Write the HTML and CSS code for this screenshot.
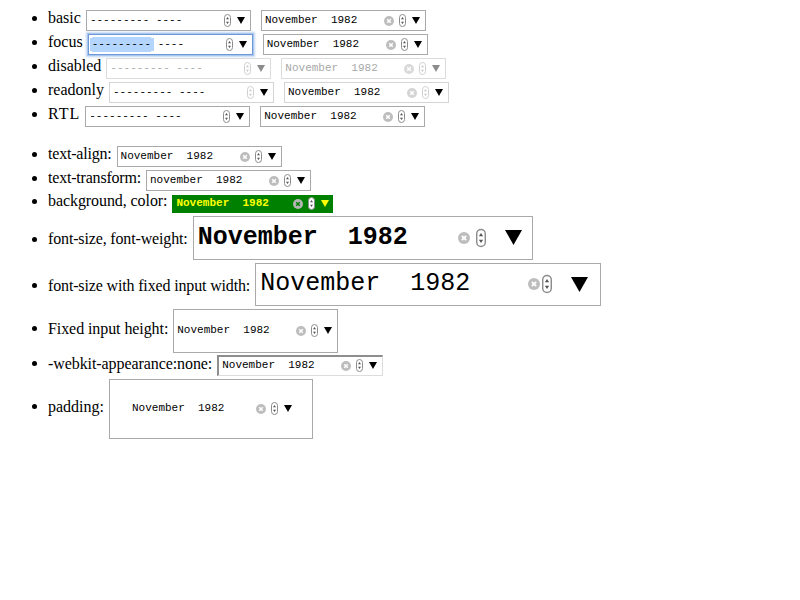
FILE: index.html
```html
<!DOCTYPE html>
<html>
<head>
<meta charset="utf-8">
<link rel="stylesheet" href="styles.css">
</head>
<body>
<ul class="list first">
  <li>basic <span class="mi gap"><span class="fields"><span class="fm">---------</span> <span class="fy">----</span></span><svg class="spin" viewBox="0 0 7 13"><rect x="0.5" y="0.5" width="6" height="12" rx="3"/><path d="M2 5.2H5L3.5 3Z M2 7.8H5L3.5 10Z"/></svg><svg class="arr" viewBox="0 0 8 7"><path d="M0 0H8L4 7Z"/></svg></span> <span class="mi"><span class="fields"><span class="fm">November</span> <span class="fy">1982</span></span><svg class="clr" viewBox="0 0 10 10"><circle cx="5" cy="5" r="5"/><path d="M3.2 3.2L6.8 6.8M6.8 3.2L3.2 6.8"/></svg><svg class="spin" viewBox="0 0 7 13"><rect x="0.5" y="0.5" width="6" height="12" rx="3"/><path d="M2 5.2H5L3.5 3Z M2 7.8H5L3.5 10Z"/></svg><svg class="arr" viewBox="0 0 8 7"><path d="M0 0H8L4 7Z"/></svg></span></li>
  <li>focus <span class="mi gap focus"><span class="fields"><span class="fm sel">---------</span> <span class="fy">----</span></span><svg class="spin" viewBox="0 0 7 13"><rect x="0.5" y="0.5" width="6" height="12" rx="3"/><path d="M2 5.2H5L3.5 3Z M2 7.8H5L3.5 10Z"/></svg><svg class="arr" viewBox="0 0 8 7"><path d="M0 0H8L4 7Z"/></svg></span> <span class="mi"><span class="fields"><span class="fm">November</span> <span class="fy">1982</span></span><svg class="clr" viewBox="0 0 10 10"><circle cx="5" cy="5" r="5"/><path d="M3.2 3.2L6.8 6.8M6.8 3.2L3.2 6.8"/></svg><svg class="spin" viewBox="0 0 7 13"><rect x="0.5" y="0.5" width="6" height="12" rx="3"/><path d="M2 5.2H5L3.5 3Z M2 7.8H5L3.5 10Z"/></svg><svg class="arr" viewBox="0 0 8 7"><path d="M0 0H8L4 7Z"/></svg></span></li>
  <li>disabled <span class="mi gap disabled"><span class="fields"><span class="fm">---------</span> <span class="fy">----</span></span><svg class="spin" viewBox="0 0 7 13"><rect x="0.5" y="0.5" width="6" height="12" rx="3"/><path d="M2 5.2H5L3.5 3Z M2 7.8H5L3.5 10Z"/></svg><svg class="arr" viewBox="0 0 8 7"><path d="M0 0H8L4 7Z"/></svg></span> <span class="mi disabled"><span class="fields"><span class="fm">November</span> <span class="fy">1982</span></span><svg class="clr" viewBox="0 0 10 10"><circle cx="5" cy="5" r="5"/><path d="M3.2 3.2L6.8 6.8M6.8 3.2L3.2 6.8"/></svg><svg class="spin" viewBox="0 0 7 13"><rect x="0.5" y="0.5" width="6" height="12" rx="3"/><path d="M2 5.2H5L3.5 3Z M2 7.8H5L3.5 10Z"/></svg><svg class="arr" viewBox="0 0 8 7"><path d="M0 0H8L4 7Z"/></svg></span></li>
  <li>readonly <span class="mi gap readonly"><span class="fields"><span class="fm">---------</span> <span class="fy">----</span></span><svg class="spin" viewBox="0 0 7 13"><rect x="0.5" y="0.5" width="6" height="12" rx="3"/><path d="M2 5.2H5L3.5 3Z M2 7.8H5L3.5 10Z"/></svg><svg class="arr" viewBox="0 0 8 7"><path d="M0 0H8L4 7Z"/></svg></span> <span class="mi readonly"><span class="fields"><span class="fm">November</span> <span class="fy">1982</span></span><svg class="clr" viewBox="0 0 10 10"><circle cx="5" cy="5" r="5"/><path d="M3.2 3.2L6.8 6.8M6.8 3.2L3.2 6.8"/></svg><svg class="spin" viewBox="0 0 7 13"><rect x="0.5" y="0.5" width="6" height="12" rx="3"/><path d="M2 5.2H5L3.5 3Z M2 7.8H5L3.5 10Z"/></svg><svg class="arr" viewBox="0 0 8 7"><path d="M0 0H8L4 7Z"/></svg></span></li>
  <li><span class="lbl-rtl">RTL</span> <span class="mi gap"><span class="fields"><span class="fm">---------</span> <span class="fy">----</span></span><svg class="spin" viewBox="0 0 7 13"><rect x="0.5" y="0.5" width="6" height="12" rx="3"/><path d="M2 5.2H5L3.5 3Z M2 7.8H5L3.5 10Z"/></svg><svg class="arr" viewBox="0 0 8 7"><path d="M0 0H8L4 7Z"/></svg></span> <span class="mi"><span class="fields"><span class="fm">November</span> <span class="fy">1982</span></span><svg class="clr" viewBox="0 0 10 10"><circle cx="5" cy="5" r="5"/><path d="M3.2 3.2L6.8 6.8M6.8 3.2L3.2 6.8"/></svg><svg class="spin" viewBox="0 0 7 13"><rect x="0.5" y="0.5" width="6" height="12" rx="3"/><path d="M2 5.2H5L3.5 3Z M2 7.8H5L3.5 10Z"/></svg><svg class="arr" viewBox="0 0 8 7"><path d="M0 0H8L4 7Z"/></svg></span></li>
</ul>
<ul class="list second">
  <li><span class="lbl-a">text-align:</span> <span class="mi"><span class="fields"><span class="fm">November</span> <span class="fy">1982</span></span><svg class="clr" viewBox="0 0 10 10"><circle cx="5" cy="5" r="5"/><path d="M3.2 3.2L6.8 6.8M6.8 3.2L3.2 6.8"/></svg><svg class="spin" viewBox="0 0 7 13"><rect x="0.5" y="0.5" width="6" height="12" rx="3"/><path d="M2 5.2H5L3.5 3Z M2 7.8H5L3.5 10Z"/></svg><svg class="arr" viewBox="0 0 8 7"><path d="M0 0H8L4 7Z"/></svg></span></li>
  <li><span class="lbl-a">text-transform:</span> <span class="mi"><span class="fields"><span class="fm">november</span> <span class="fy">1982</span></span><svg class="clr" viewBox="0 0 10 10"><circle cx="5" cy="5" r="5"/><path d="M3.2 3.2L6.8 6.8M6.8 3.2L3.2 6.8"/></svg><svg class="spin" viewBox="0 0 7 13"><rect x="0.5" y="0.5" width="6" height="12" rx="3"/><path d="M2 5.2H5L3.5 3Z M2 7.8H5L3.5 10Z"/></svg><svg class="arr" viewBox="0 0 8 7"><path d="M0 0H8L4 7Z"/></svg></span></li>
  <li><span class="lbl-c">background, color:</span> <span class="mi green"><span class="fields"><span class="fm">November</span> <span class="fy">1982</span></span><svg class="clr" viewBox="0 0 10 10"><circle cx="5" cy="5" r="5"/><path d="M3.2 3.2L6.8 6.8M6.8 3.2L3.2 6.8"/></svg><svg class="spin" viewBox="0 0 7 13"><rect x="0.5" y="0.5" width="6" height="12" rx="3"/><path d="M2 5.2H5L3.5 3Z M2 7.8H5L3.5 10Z"/></svg><svg class="arr" viewBox="0 0 8 7"><path d="M0 0H8L4 7Z"/></svg></span></li>
  <li><span class="lbl-b">font-size, font-weight:</span> <span class="mi big bold"><span class="fields"><span class="fm">November</span> <span class="fy">1982</span></span><svg class="clr" viewBox="0 0 10 10"><circle cx="5" cy="5" r="5"/><path d="M3.2 3.2L6.8 6.8M6.8 3.2L3.2 6.8"/></svg><svg class="spin" viewBox="0 0 7 13"><rect x="0.5" y="0.5" width="6" height="12" rx="3"/><path d="M2 5.2H5L3.5 3Z M2 7.8H5L3.5 10Z"/></svg><svg class="arr" viewBox="0 0 8 7"><path d="M0 0H8L4 7Z"/></svg></span></li>
  <li><span class="lbl-b">font-size with fixed input width:</span> <span class="mi big fixedw"><span class="fields"><span class="fm">November</span> <span class="fy">1982</span></span><svg class="clr" viewBox="0 0 10 10"><circle cx="5" cy="5" r="5"/><path d="M3.2 3.2L6.8 6.8M6.8 3.2L3.2 6.8"/></svg><svg class="spin" viewBox="0 0 7 13"><rect x="0.5" y="0.5" width="6" height="12" rx="3"/><path d="M2 5.2H5L3.5 3Z M2 7.8H5L3.5 10Z"/></svg><svg class="arr" viewBox="0 0 8 7"><path d="M0 0H8L4 7Z"/></svg></span></li>
  <li><span class="lbl-c">Fixed input height:</span> <span class="mi tall"><span class="fields"><span class="fm">November</span> <span class="fy">1982</span></span><svg class="clr" viewBox="0 0 10 10"><circle cx="5" cy="5" r="5"/><path d="M3.2 3.2L6.8 6.8M6.8 3.2L3.2 6.8"/></svg><svg class="spin" viewBox="0 0 7 13"><rect x="0.5" y="0.5" width="6" height="12" rx="3"/><path d="M2 5.2H5L3.5 3Z M2 7.8H5L3.5 10Z"/></svg><svg class="arr" viewBox="0 0 8 7"><path d="M0 0H8L4 7Z"/></svg></span></li>
  <li><span class="lbl-c">-webkit-appearance:none:</span> <span class="mi inset"><span class="fields"><span class="fm">November</span> <span class="fy">1982</span></span><svg class="clr" viewBox="0 0 10 10"><circle cx="5" cy="5" r="5"/><path d="M3.2 3.2L6.8 6.8M6.8 3.2L3.2 6.8"/></svg><svg class="spin" viewBox="0 0 7 13"><rect x="0.5" y="0.5" width="6" height="12" rx="3"/><path d="M2 5.2H5L3.5 3Z M2 7.8H5L3.5 10Z"/></svg><svg class="arr" viewBox="0 0 8 7"><path d="M0 0H8L4 7Z"/></svg></span></li>
  <li>padding: <span class="mi padded"><span class="fields"><span class="fm">November</span> <span class="fy">1982</span></span><svg class="clr" viewBox="0 0 10 10"><circle cx="5" cy="5" r="5"/><path d="M3.2 3.2L6.8 6.8M6.8 3.2L3.2 6.8"/></svg><svg class="spin" viewBox="0 0 7 13"><rect x="0.5" y="0.5" width="6" height="12" rx="3"/><path d="M2 5.2H5L3.5 3Z M2 7.8H5L3.5 10Z"/></svg><svg class="arr" viewBox="0 0 8 7"><path d="M0 0H8L4 7Z"/></svg></span></li>
</ul>
</body>
</html>
```
FILE: styles.css
```css
body {
  margin: 8px;
  font-family: "Liberation Serif", "Times New Roman", serif;
  font-size: 16px;
  color: #000;
  background: #fff;
}
.list {
  margin: 16px 0;
  padding-left: 40px;
}
.list.first {
  margin-top: 0;
}
.list li {
  line-height: 18px;
}
.lbl-a {
  letter-spacing: -0.2px;
}
.lbl-b {
  letter-spacing: -0.15px;
}
.lbl-c {
  letter-spacing: -0.08px;
}
.lbl-rtl {
  letter-spacing: 1px;
}
.mi {
  display: inline-flex;
  align-items: center;
  box-sizing: border-box;
  width: 165px;
  height: 21px;
  margin: 2px 1px 1px 1px;
  padding: 0 5px 0 3px;
  border: 1px solid #a9a9a9;
  background: #fff;
  font-family: "Liberation Mono", "Courier New", monospace;
  font-size: 11px;
  line-height: 13px;
  color: #000;
  vertical-align: baseline;
}
.mi.gap {
  margin-right: 5px;
}
.fields {
  flex: 1;
  white-space: pre;
}
.fm {
  display: inline-block;
  width: 9ch;
}
.fy {
  display: inline-block;
}
.sel {
  background: #b4d5fe;
  box-shadow: -2px 0 0 #b4d5fe, 3px 0 0 #b4d5fe, 0 -1px 0 #b4d5fe, 0 1px 0 #b4d5fe;
}
.clr {
  width: 10px;
  height: 10px;
  margin-right: 5px;
  flex: none;
}
.clr circle {
  fill: #bdbdbd;
}
.clr path {
  stroke: #fff;
  stroke-width: 1.5;
}
.spin {
  width: 7px;
  height: 13px;
  margin-right: 6px;
  flex: none;
}
.spin rect {
  fill: #fff;
  stroke: #8c8c8c;
  stroke-width: 1;
}
.spin path {
  fill: #555;
}
.arr {
  width: 8px;
  height: 7px;
  flex: none;
  fill: #000;
}
.focus {
  border-color: #6d9ad6;
  box-shadow: 0 0 0 1px #a9c6ee, 0 0 2px 2px #c3d7f2;
}
.disabled {
  border-color: #dcdcdc;
  color: #a8a8a8;
}
.disabled .clr circle {
  fill: #d9d9d9;
}
.disabled .spin rect {
  stroke: #cfcfcf;
}
.disabled .spin path {
  fill: #c8c8c8;
}
.disabled .arr {
  fill: #8c8c8c;
}
.readonly {
  border-color: #d4d4d4;
}
.readonly .clr circle {
  fill: #d4d4d4;
}
.readonly .spin rect {
  stroke: #cfcfcf;
}
.readonly .spin path {
  fill: #c8c8c8;
}
.green {
  width: 161px;
  height: 18px;
  border-color: #008000;
  background: #008000;
  color: #ffff00;
  font-weight: bold;
  padding-right: 3px;
}
.green .clr circle {
  fill: #b5b5b5;
}
.green .clr path {
  stroke: #008000;
}
.green .arr {
  fill: #ffff00;
}
.big {
  font-size: 25px;
  line-height: 28px;
  height: 44px;
  padding: 0 10px 0 4px;
}
.big .clr {
  width: 12px;
  height: 12px;
  margin-right: 6px;
}
.big .spin {
  width: 10px;
  height: 20px;
  margin-right: 19px;
}
.big .arr {
  width: 17px;
  height: 15px;
}
.bold {
  width: 340px;
  font-weight: bold;
}
.fixedw {
  width: 346px;
  height: 43px;
  padding-right: 12px;
}
.fixedw .clr {
  margin-right: 2px;
}
.tall {
  height: 44px;
  width: 165px;
}
.inset {
  width: 166px;
  border-width: 2px 1px 1px 2px;
  border-style: solid;
  border-color: #8e8e8e #dcdcdc #dcdcdc #8e8e8e;
  height: 21px;
  margin-top: 1px;
  margin-bottom: 1px;
}
.padded {
  width: 204px;
  height: 60px;
  padding: 20px 20px 20px 22px;
}
```
